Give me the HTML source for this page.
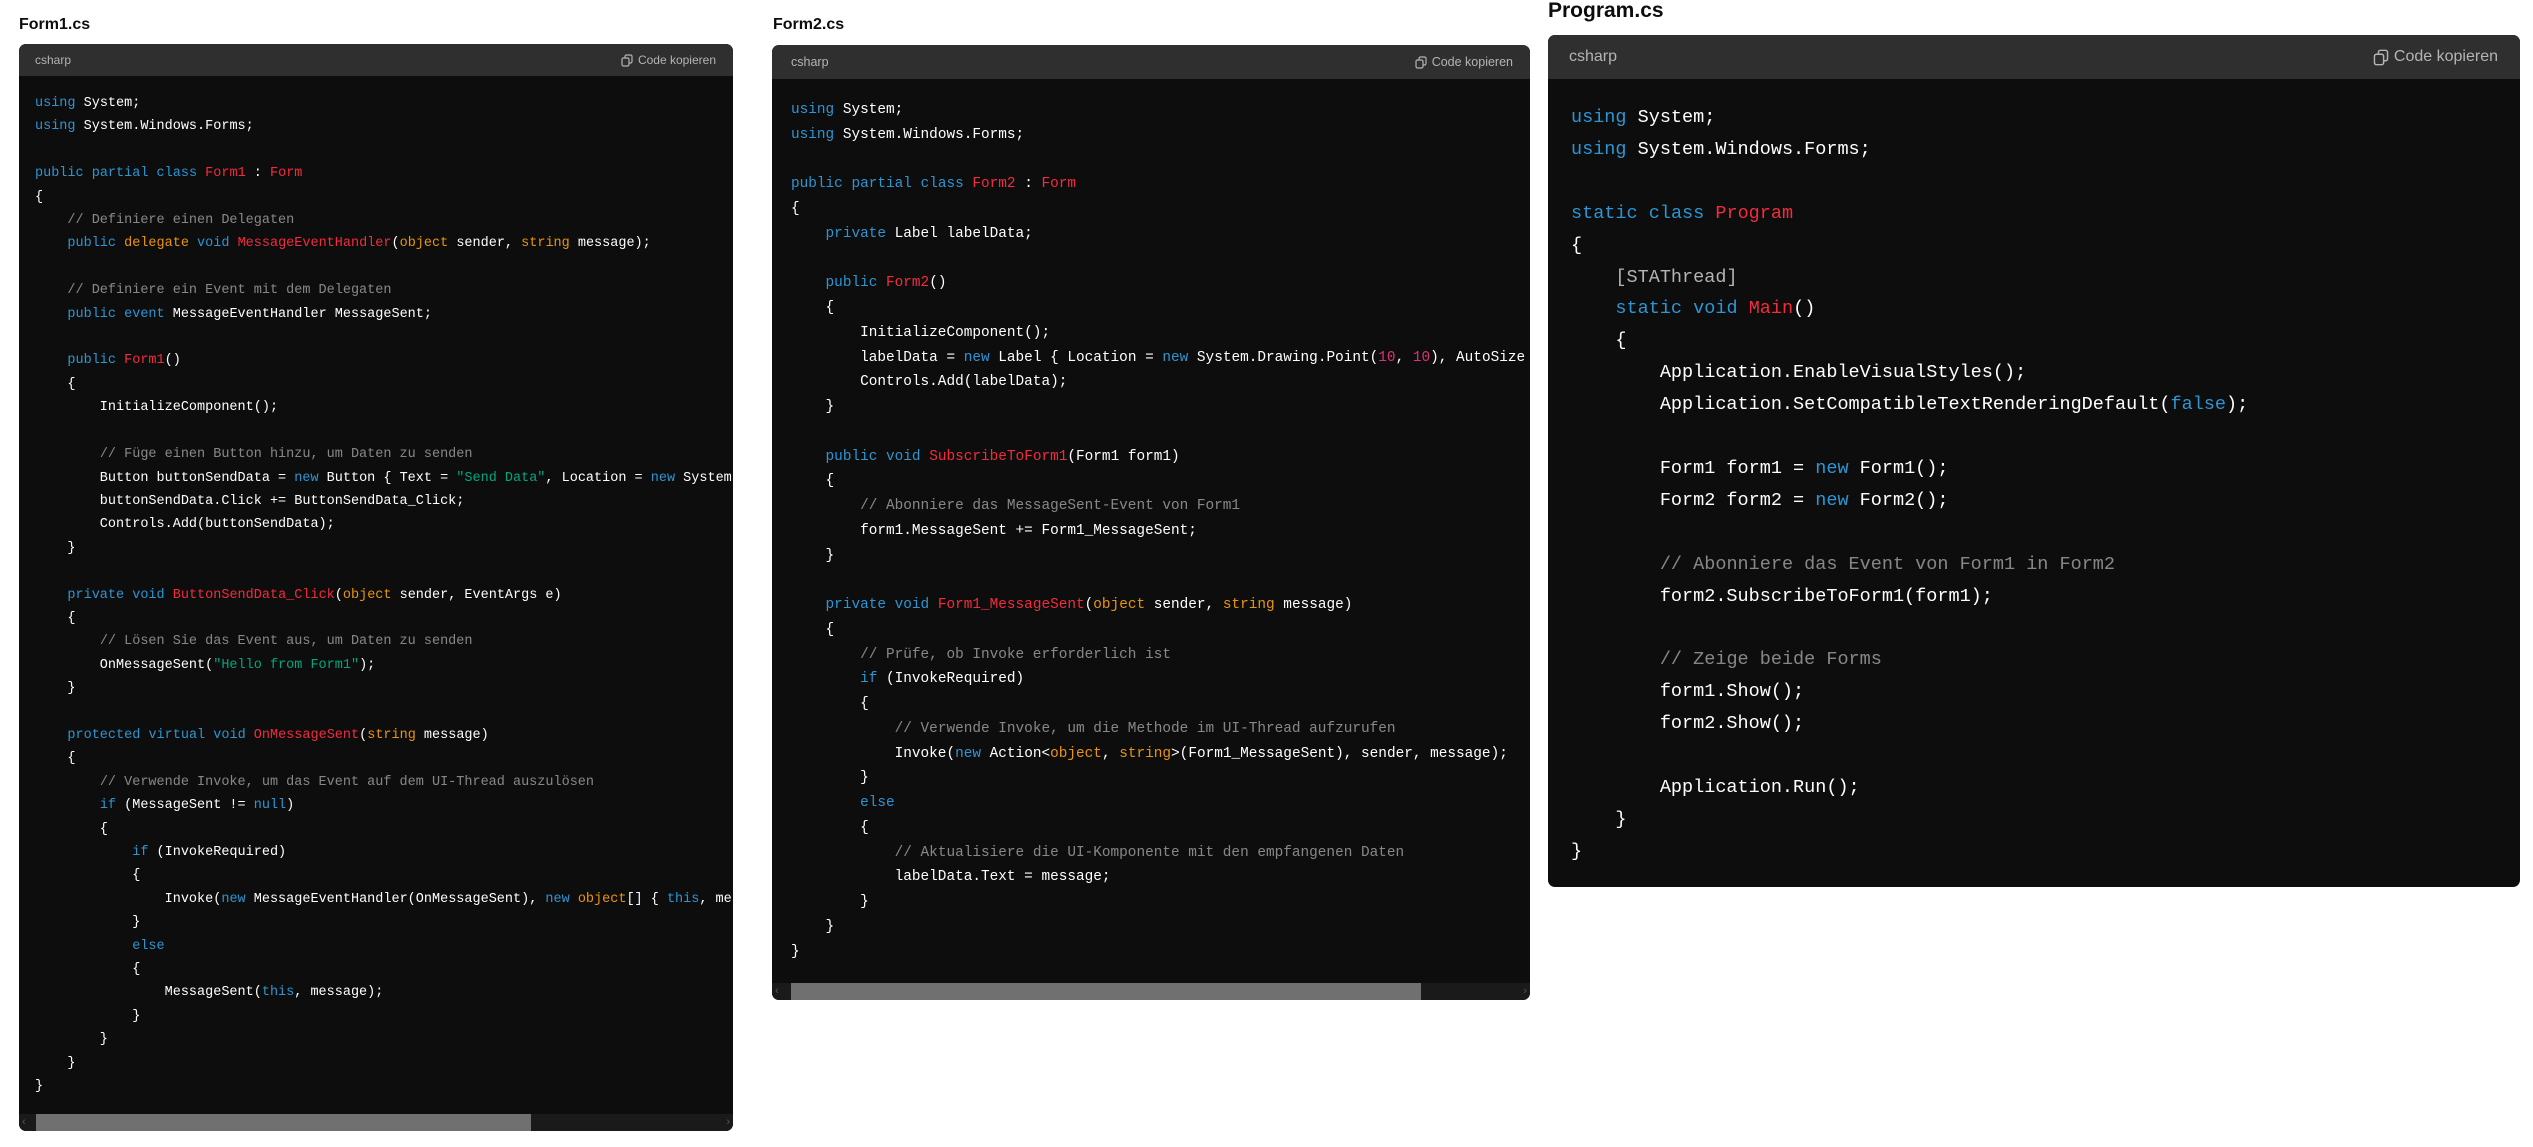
<!DOCTYPE html>
<html><head><meta charset="utf-8">
<style>
html,body{margin:0;padding:0;background:#fff;width:2533px;height:1147px;overflow:hidden;position:relative;font-family:"Liberation Sans",sans-serif}
.title{position:absolute;font-weight:bold;color:#0d0d0d;white-space:nowrap}
.box{position:absolute;background:#0d0d0d;border-radius:7px;overflow:hidden}
.hd{background:#2f2f2f;color:#b4b4b4;display:flex;align-items:center;justify-content:space-between;box-sizing:border-box}
.cp{display:flex;align-items:center;gap:5px}
pre{margin:0;font-family:"Liberation Mono",monospace;color:#fff;white-space:pre;overflow:hidden}
.k{color:#2e95d3}.t{color:#f22c3d}.s{color:#e9950c}.g{color:#00a67d}.c{color:rgba(255,255,255,.5)}.n{color:#df3079}.m{color:#b4b4b4}
.sb{position:absolute;left:0;right:0;bottom:0;height:17px;background:#1a1a1a}
.th{position:absolute;top:0;bottom:0;background:#707070}
.ar{position:absolute;top:0;font-size:11px;color:#555;line-height:17px}
</style></head><body>

<div class="title" style="left:19px;top:16px;font-size:16px">Form1.cs</div>
<div class="box" style="left:19px;top:44px;width:714px;height:1087px">
 <div class="hd" style="height:32px;padding:0 17px 0 16px;font-size:12px"><span>csharp</span><span class="cp"><svg width="12" height="13" viewBox="0 0 12 13" fill="none" stroke="#b4b4b4" stroke-width="1.2"><rect x="1" y="4" width="7" height="8" rx="1.5"/><path d="M4 4V2.5A1.5 1.5 0 0 1 5.5 1h4A1.5 1.5 0 0 1 11 2.5v5A1.5 1.5 0 0 1 9.5 9H8"/></svg>Code kopieren</span></div>
<pre style="padding:16px 16px;font-size:13.5px;line-height:23.4px"><span class="k">using</span> System;
<span class="k">using</span> System.Windows.Forms;

<span class="k">public</span> <span class="k">partial</span> <span class="k">class</span> <span class="t">Form1</span> : <span class="t">Form</span>
{
    <span class="c">// Definiere einen Delegaten</span>
    <span class="k">public</span> <span class="s">delegate</span> <span class="k">void</span> <span class="t">MessageEventHandler</span>(<span class="s">object</span> sender, <span class="s">string</span> message);

    <span class="c">// Definiere ein Event mit dem Delegaten</span>
    <span class="k">public</span> <span class="k">event</span> MessageEventHandler MessageSent;

    <span class="k">public</span> <span class="t">Form1</span>()
    {
        InitializeComponent();

        <span class="c">// Füge einen Button hinzu, um Daten zu senden</span>
        Button buttonSendData = <span class="k">new</span> Button { Text = <span class="g">"Send Data"</span>, Location = <span class="k">new</span> System.Drawing.Point(<span class="n">10</span>, <span class="n">10</span>) };
        buttonSendData.Click += ButtonSendData_Click;
        Controls.Add(buttonSendData);
    }

    <span class="k">private</span> <span class="k">void</span> <span class="t">ButtonSendData_Click</span>(<span class="s">object</span> sender, EventArgs e)
    {
        <span class="c">// Lösen Sie das Event aus, um Daten zu senden</span>
        OnMessageSent(<span class="g">"Hello from Form1"</span>);
    }

    <span class="k">protected</span> <span class="k">virtual</span> <span class="k">void</span> <span class="t">OnMessageSent</span>(<span class="s">string</span> message)
    {
        <span class="c">// Verwende Invoke, um das Event auf dem UI-Thread auszulösen</span>
        <span class="k">if</span> (MessageSent != <span class="k">null</span>)
        {
            <span class="k">if</span> (InvokeRequired)
            {
                Invoke(<span class="k">new</span> MessageEventHandler(OnMessageSent), <span class="k">new</span> <span class="s">object</span>[] { <span class="k">this</span>, message });
            }
            <span class="k">else</span>
            {
                MessageSent(<span class="k">this</span>, message);
            }
        }
    }
}</pre>
 <div class="sb"><div class="th" style="left:17px;width:495px"></div><span class="ar" style="left:3px">‹</span><span class="ar" style="right:3px">›</span></div>
</div>

<div class="title" style="left:773px;top:16px;font-size:16px">Form2.cs</div>
<div class="box" style="left:772px;top:45px;width:758px;height:955px">
 <div class="hd" style="height:34px;padding:0 17px 0 19px;font-size:12.5px"><span>csharp</span><span class="cp"><svg width="12" height="13" viewBox="0 0 12 13" fill="none" stroke="#b4b4b4" stroke-width="1.2"><rect x="1" y="4" width="7" height="8" rx="1.5"/><path d="M4 4V2.5A1.5 1.5 0 0 1 5.5 1h4A1.5 1.5 0 0 1 11 2.5v5A1.5 1.5 0 0 1 9.5 9H8"/></svg>Code kopieren</span></div>
<pre style="padding:19px 19px;font-size:14.4px;line-height:24.75px"><span class="k">using</span> System;
<span class="k">using</span> System.Windows.Forms;

<span class="k">public</span> <span class="k">partial</span> <span class="k">class</span> <span class="t">Form2</span> : <span class="t">Form</span>
{
    <span class="k">private</span> Label labelData;

    <span class="k">public</span> <span class="t">Form2</span>()
    {
        InitializeComponent();
        labelData = <span class="k">new</span> Label { Location = <span class="k">new</span> System.Drawing.Point(<span class="n">10</span>, <span class="n">10</span>), AutoSize = <span class="k">true</span> };
        Controls.Add(labelData);
    }

    <span class="k">public</span> <span class="k">void</span> <span class="t">SubscribeToForm1</span>(Form1 form1)
    {
        <span class="c">// Abonniere das MessageSent-Event von Form1</span>
        form1.MessageSent += Form1_MessageSent;
    }

    <span class="k">private</span> <span class="k">void</span> <span class="t">Form1_MessageSent</span>(<span class="s">object</span> sender, <span class="s">string</span> message)
    {
        <span class="c">// Prüfe, ob Invoke erforderlich ist</span>
        <span class="k">if</span> (InvokeRequired)
        {
            <span class="c">// Verwende Invoke, um die Methode im UI-Thread aufzurufen</span>
            Invoke(<span class="k">new</span> Action&lt;<span class="s">object</span>, <span class="s">string</span>&gt;(Form1_MessageSent), sender, message);
        }
        <span class="k">else</span>
        {
            <span class="c">// Aktualisiere die UI-Komponente mit den empfangenen Daten</span>
            labelData.Text = message;
        }
    }
}</pre>
 <div class="sb"><div class="th" style="left:19px;width:630px"></div><span class="ar" style="left:3px">‹</span><span class="ar" style="right:3px">›</span></div>
</div>

<div class="title" style="left:1548px;top:-1px;font-size:21px">Program.cs</div>
<div class="box" style="left:1548px;top:35px;width:972px;height:852px">
 <div class="hd" style="height:44px;padding:0 22px 0 21px;font-size:16px"><span>csharp</span><span class="cp"><svg width="16" height="17" viewBox="0 0 12 13" fill="none" stroke="#b4b4b4" stroke-width="1.1"><rect x="1" y="4" width="7" height="8" rx="1.5"/><path d="M4 4V2.5A1.5 1.5 0 0 1 5.5 1h4A1.5 1.5 0 0 1 11 2.5v5A1.5 1.5 0 0 1 9.5 9H8"/></svg>Code kopieren</span></div>
<pre style="padding:23px 23px;font-size:18.5px;line-height:31.9px"><span class="k">using</span> System;
<span class="k">using</span> System.Windows.Forms;

<span class="k">static</span> <span class="k">class</span> <span class="t">Program</span>
{
    <span class="m">[STAThread]</span>
    <span class="k">static</span> <span class="k">void</span> <span class="t">Main</span>()
    {
        Application.EnableVisualStyles();
        Application.SetCompatibleTextRenderingDefault(<span class="k">false</span>);

        Form1 form1 = <span class="k">new</span> Form1();
        Form2 form2 = <span class="k">new</span> Form2();

        <span class="c">// Abonniere das Event von Form1 in Form2</span>
        form2.SubscribeToForm1(form1);

        <span class="c">// Zeige beide Forms</span>
        form1.Show();
        form2.Show();

        Application.Run();
    }
}</pre>
</div>
</body></html>
